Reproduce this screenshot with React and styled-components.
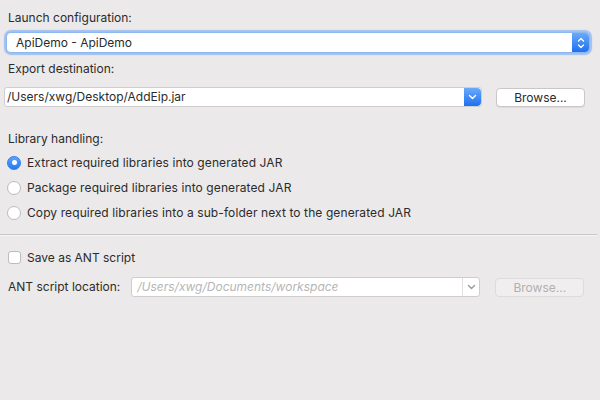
import React from 'react';
import styled, { createGlobalStyle } from 'styled-components';

const GlobalStyle = createGlobalStyle`
  html, body {
    margin: 0;
    padding: 0;
    background: #ebe9ea;
  }
  body {
    font-family: Inter, "Noto Sans", "Liberation Sans", sans-serif;
    font-size: 12px;
    color: #2b2b2b;
  }
`;

const Page = styled.div`
  width: 600px;
  height: 400px;
  display: flex;
  flex-direction: column;
  overflow: hidden;
`;

const Label = styled.div`
  height: 16px;
  line-height: 16px;
  margin: ${(p) => p.$mt || 0}px 0 0 8px;
  white-space: nowrap;
`;

const Combo = styled.div`
  margin: 7px 11px 0 7px;
  height: 19px;
  display: flex;
  align-items: stretch;
  background: #fff;
  border-radius: 4px;
  box-shadow: 0 0 0 1px #8db9f3, 0 0 1px 3px rgba(100, 158, 240, 0.55);
`;

const ComboText = styled.div`
  flex: 1;
  padding-left: 9px;
  line-height: 19px;
`;

const BlueButton = styled.div`
  width: ${(p) => p.$w}px;
  display: flex;
  align-items: center;
  justify-content: center;
  background: linear-gradient(#6aaafa, #1d70f1);
  border-radius: 0 4px 4px 0;
`;

const Row = styled.div`
  display: flex;
  align-items: center;
  margin-top: ${(p) => p.$mt}px;
  height: 20px;
`;

const Field = styled.div`
  margin-left: ${(p) => p.$ml}px;
  width: ${(p) => p.$w}px;
  height: 20px;
  box-sizing: border-box;
  display: flex;
  background: #fff;
  border: 1px solid #cfcdce;
  border-radius: 3px;
  overflow: hidden;
`;

const FieldText = styled.div`
  flex: 1;
  padding-left: ${(p) => p.$pl || 2}px;
  line-height: 18px;
  color: ${(p) => (p.$disabled ? '#b7b5b6' : 'inherit')};
  font-style: ${(p) => (p.$disabled ? 'italic' : 'normal')};
  white-space: nowrap;
`;

const GrayDrop = styled.div`
  width: 16px;
  border-left: 1px solid #e0dedf;
  display: flex;
  align-items: center;
  justify-content: center;
`;

const Button = styled.div`
  margin-left: ${(p) => p.$ml}px;
  width: 89px;
  height: 19px;
  box-sizing: border-box;
  display: flex;
  align-items: center;
  justify-content: center;
  background: ${(p) => (p.$disabled ? '#f0eeef' : '#fff')};
  border: 1px solid ${(p) => (p.$disabled ? '#dddbdc' : '#c9c7c8')};
  border-radius: 4px;
  color: ${(p) => (p.$disabled ? '#b2b0b1' : '#2b2b2b')};
  box-shadow: ${(p) => (p.$disabled ? 'none' : '0 1px 0 rgba(0,0,0,0.06)')};
`;

const RadioGroup = styled.div`
  margin-top: 3px;
  display: flex;
  flex-direction: column;
`;

const RadioRow = styled.label`
  height: 25px;
  display: flex;
  align-items: center;
  gap: 6px;
  padding-left: 7px;
  letter-spacing: 0.1px;
`;

const Radio = styled.span`
  width: 14px;
  height: 14px;
  box-sizing: border-box;
  border-radius: 50%;
  display: flex;
  align-items: center;
  justify-content: center;
  background: ${(p) => (p.$on ? 'linear-gradient(#5fa3fb, #2479f4)' : '#fff')};
  border: 1px solid ${(p) => (p.$on ? '#2b7ef3' : '#bdbbbc')};
  &::after {
    content: '';
    display: ${(p) => (p.$on ? 'block' : 'none')};
    width: 5px;
    height: 5px;
    border-radius: 50%;
    background: #fff;
  }
`;

const Separator = styled.div`
  margin: 9px 3px 0 0;
  height: 1px;
  background: #c9c7c8;
  box-shadow: 0 1px 0 #f6f5f5;
`;

const CheckRow = styled.label`
  margin-top: 12px;
  height: 20px;
  display: flex;
  align-items: center;
  gap: 6px;
  padding-left: 8px;
`;

const Checkbox = styled.span`
  width: 13px;
  height: 13px;
  box-sizing: border-box;
  background: #fff;
  border: 1px solid #bdbbbc;
  border-radius: 3px;
`;

const Chevron = ({ color = '#fff' }) => (
  <svg width="9" height="6" viewBox="0 0 9 6">
    <path d="M1.5 1.5 L4.5 4.5 L7.5 1.5" fill="none" stroke={color} strokeWidth="1.4" strokeLinecap="round" strokeLinejoin="round" />
  </svg>
);

const Stepper = () => (
  <svg width="8" height="12" viewBox="0 0 8 12">
    <path d="M1.5 4 L4 1.5 L6.5 4 M1.5 8 L4 10.5 L6.5 8" fill="none" stroke="#fff" strokeWidth="1.3" strokeLinecap="round" strokeLinejoin="round" />
  </svg>
);

const options = [
  'Extract required libraries into generated JAR',
  'Package required libraries into generated JAR',
  'Copy required libraries into a sub-folder next to the generated JAR',
];

export default function App() {
  return (
    <Page>
      <GlobalStyle />
      <Label $mt={10}>Launch configuration:</Label>
      <Combo>
        <ComboText>ApiDemo - ApiDemo</ComboText>
        <BlueButton $w={17}>
          <Stepper />
        </BlueButton>
      </Combo>

      <Label $mt={9}>Export destination:</Label>
      <Row $mt={10}>
        <Field $ml={4} $w={478}>
          <FieldText>/Users/xwg/Desktop/AddEip.jar</FieldText>
          <BlueButton $w={17}>
            <Chevron />
          </BlueButton>
        </Field>
        <Button $ml={14}>Browse...</Button>
      </Row>

      <Label $mt={24}>Library handling:</Label>
      <RadioGroup>
        {options.map((o, i) => (
          <RadioRow key={o}>
            <Radio $on={i === 0} />
            {o}
          </RadioRow>
        ))}
      </RadioGroup>

      <Separator />

      <CheckRow>
        <Checkbox />
        Save as ANT script
      </CheckRow>

      <Row $mt={10}>
        <Label>ANT script location:</Label>
        <Field $ml={11} $w={349}>
          <FieldText $pl={5} $disabled>/Users/xwg/Documents/workspace</FieldText>
          <GrayDrop>
            <Chevron color="#9a9899" />
          </GrayDrop>
        </Field>
        <Button $ml={15} $disabled>Browse...</Button>
      </Row>
    </Page>
  );
}
